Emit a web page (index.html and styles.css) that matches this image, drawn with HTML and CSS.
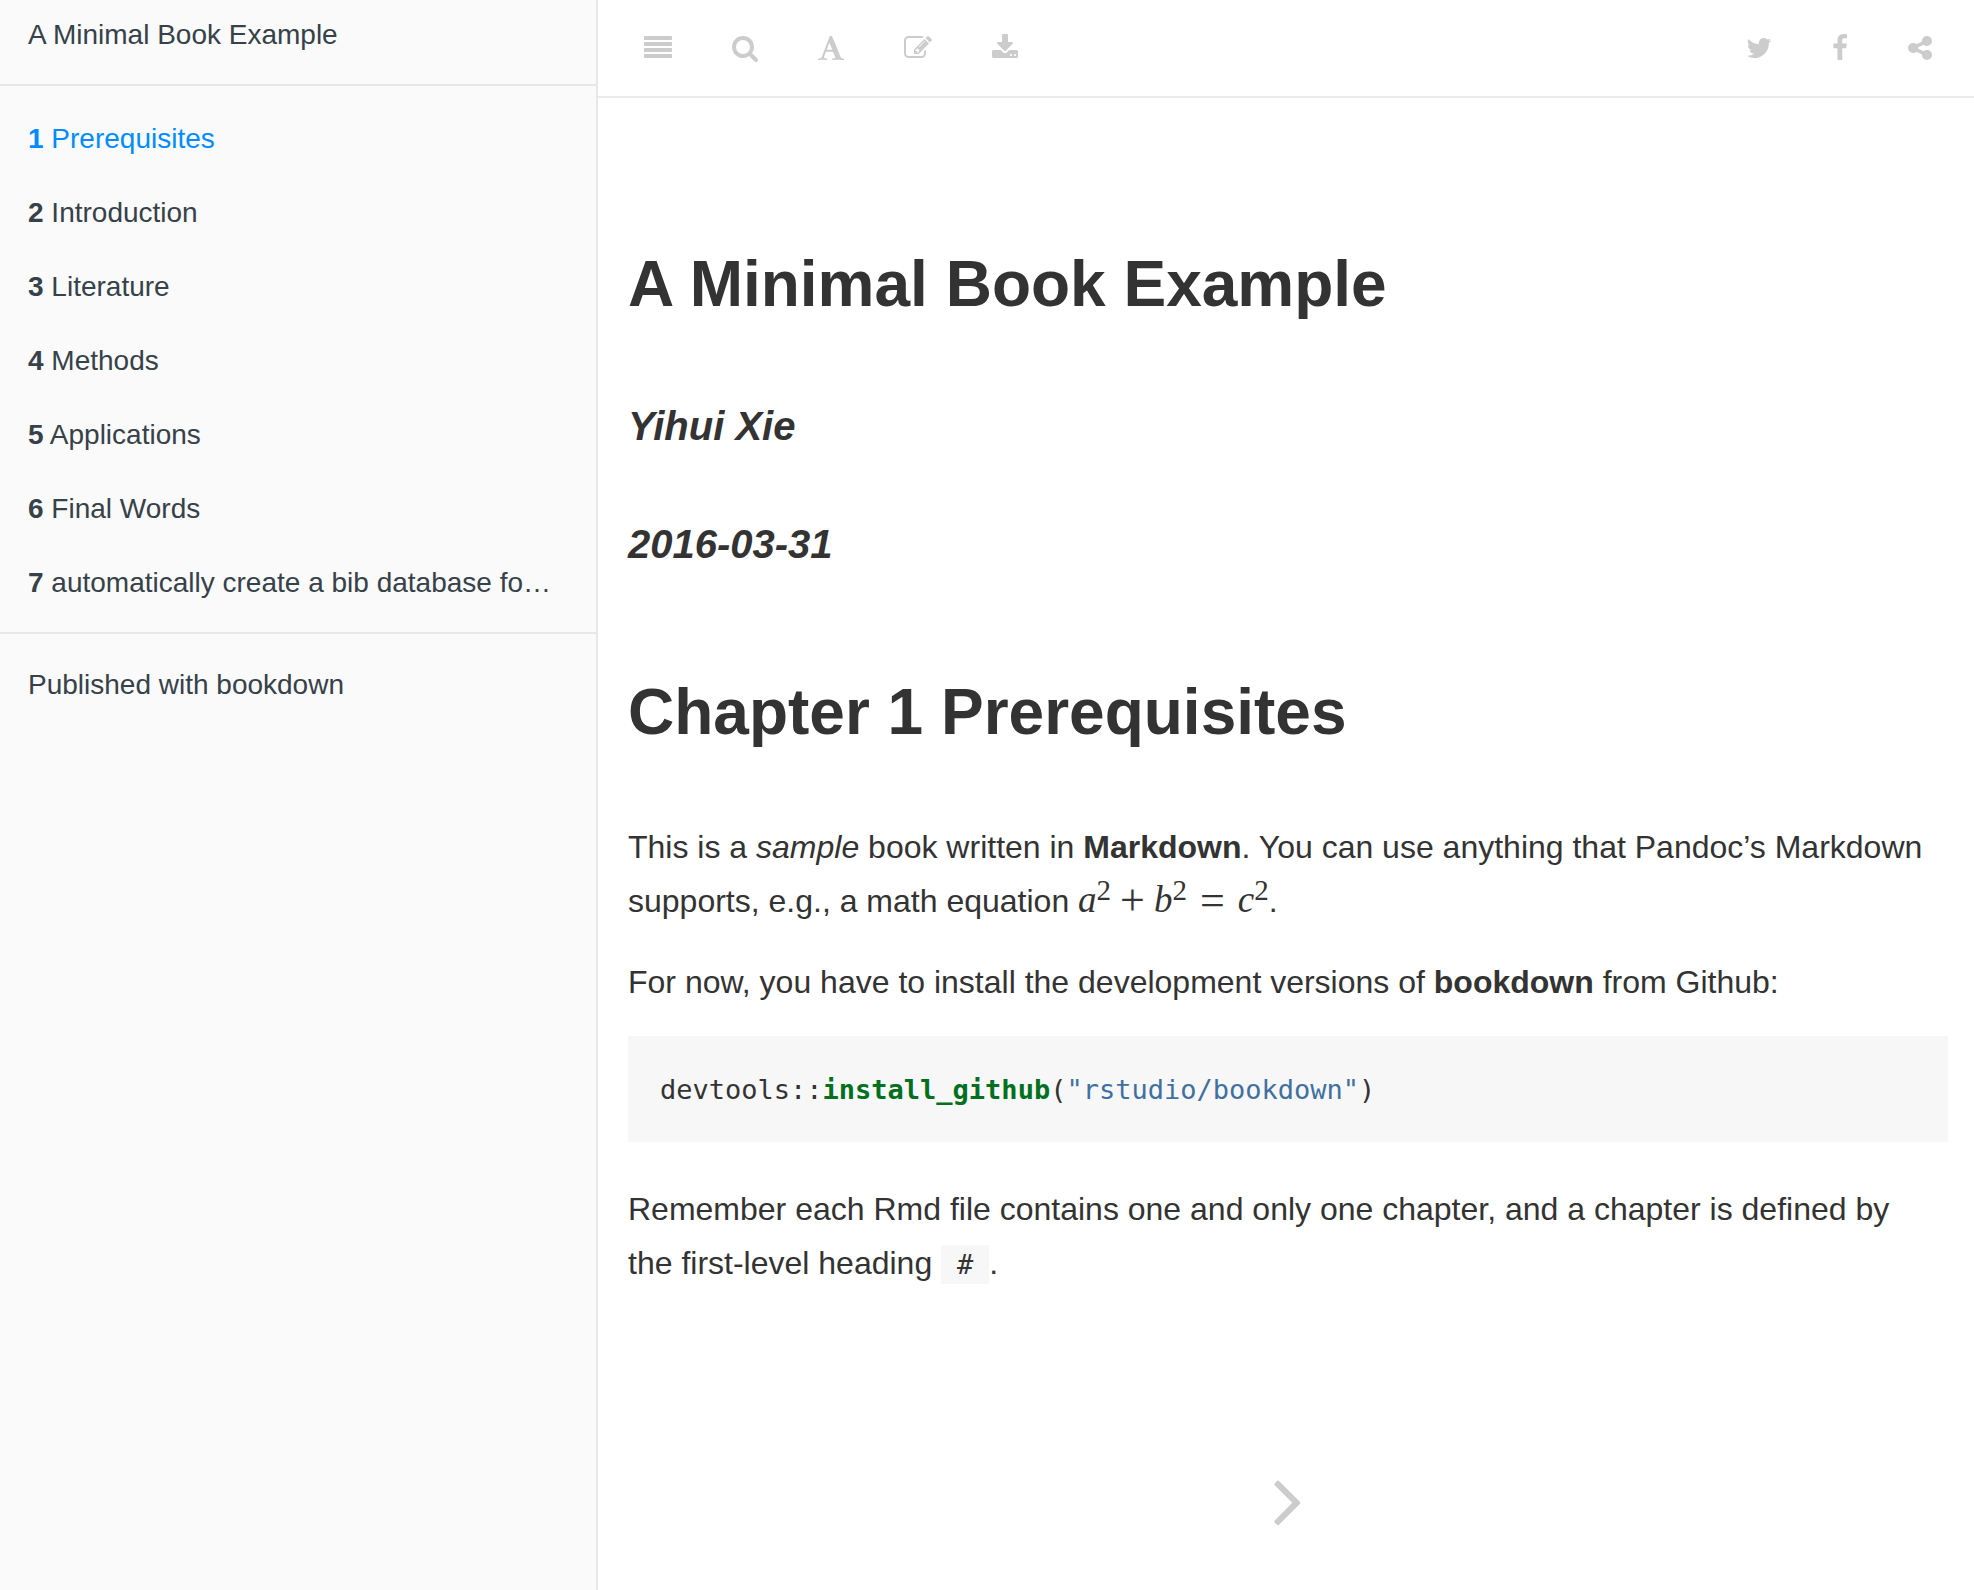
FILE: index.html
```html
<!DOCTYPE html>
<html lang="en">
<head>
<meta charset="utf-8">
<meta name="viewport" content="width=device-width, initial-scale=1">
<title>A Minimal Book Example</title>
<link rel="stylesheet" href="styles.css">
</head>
<body>
<div class="book">
  <aside class="sidebar">
    <a class="sidebar-link book-title" href="#top">A Minimal Book Example</a>
    <nav class="chapters" aria-label="Chapters">
      <a class="sidebar-link active" href="#prerequisites"><b>1</b> Prerequisites</a>
      <a class="sidebar-link" href="#introduction"><b>2</b> Introduction</a>
      <a class="sidebar-link" href="#literature"><b>3</b> Literature</a>
      <a class="sidebar-link" href="#methods"><b>4</b> Methods</a>
      <a class="sidebar-link" href="#applications"><b>5</b> Applications</a>
      <a class="sidebar-link" href="#final-words"><b>6</b> Final Words</a>
      <a class="sidebar-link" href="#bib"><b>7</b> automatically create a bib database fo…</a>
    </nav>
    <a class="sidebar-link published" href="#bookdown">Published with bookdown</a>
  </aside>
  <div class="body">
    <header class="toolbar">
      <div class="tools">
        <button class="tool" type="button" aria-label="Toggle sidebar"><svg width="28" height="28" viewBox="0 0 1792 1792"><path d="M1792 1344v128q0 26-19 45t-45 19h-1664q-26 0-45-19t-19-45v-128q0-26 19-45t45-19h1664q26 0 45 19t19 45zm0-384v128q0 26-19 45t-45 19h-1664q-26 0-45-19t-19-45v-128q0-26 19-45t45-19h1664q26 0 45 19t19 45zm0-384v128q0 26-19 45t-45 19h-1664q-26 0-45-19t-19-45v-128q0-26 19-45t45-19h1664q26 0 45 19t19 45zm0-384v128q0 26-19 45t-45 19h-1664q-26 0-45-19t-19-45v-128q0-26 19-45t45-19h1664q26 0 45 19t19 45z"/></svg></button>
        <button class="tool" type="button" aria-label="Search"><svg width="26" height="28" viewBox="64 0 1664 1792"><path d="M1216 832q0-185-131.500-316.500t-316.500-131.500-316.500 131.500-131.500 316.500 131.500 316.500 316.500 131.500 316.500-131.500 131.500-316.500zm512 832q0 52-38 90t-90 38q-54 0-90-38l-343-342q-179 124-399 124-143 0-273.500-55.500t-225-150-150-225-55.500-273.500 55.500-273.500 150-225 225-150 273.500-55.500 273.500 55.500 225 150 150 225 55.500 273.500q0 220-124 399l343 343q37 37 37 90z"/></svg></button>
        <button class="tool" type="button" aria-label="Font settings"><svg width="26" height="28" viewBox="64 0 1664 1792"><path d="M789 559l-170 450q33 0 136.500 2t160.500 2q19 0 57-2-87-253-184-452zm-725 1105l2-79q23-7 56-12.500t57-10.500 49.500-14.500 44.500-29 31-50.500l237-616 280-724h128q8 14 11 21l205 480q33 78 106 257.500t114 274.500q15 34 58 144.500t72 168.500q20 45 35 57 19 15 88 29.500t84 20.500q6 38 6 57 0 5-.5 13.500t-.5 12.500q-63 0-190-8t-191-8q-76 0-215 7t-178 8q0-43 4-78l131-28q1 0 12.500-2.500t15.500-3.500 14.500-4.500 15-6.500 11-8 9-11 2.500-14q0-16-31-96.500t-72-177.500-42-100l-450-2q-26 58-76.500 195.500t-50.500 162.500q0 22 14 37.500t43.500 24.500 48.500 13.500 57 8.500 41 4q1 19 1 58 0 9-2 27-58 0-174.500-10t-174.500-10q-8 0-26.500 4t-21.500 4q-80 14-188 14z"/></svg></button>
        <button class="tool" type="button" aria-label="Edit"><svg width="28" height="28" viewBox="0 0 1792 1792"><path d="M888 1184l116-116-152-152-116 116v56h96v96h56zm440-720q-16-16-33 1l-350 350q-17 17-1 33t33-1l350-350q17-17 1-33zm80 594v190q0 119-84.500 203.500t-203.500 84.500h-832q-119 0-203.500-84.500t-84.500-203.500v-832q0-119 84.500-203.500t203.500-84.500h832q63 0 117 25 15 7 18 23 3 17-9 29l-49 49q-14 14-32 8-23-6-45-6h-832q-66 0-113 47t-47 113v832q0 66 47 113t113 47h832q66 0 113-47t47-113v-126q0-13 9-22l64-64q15-15 35-7t20 29zm-96-738l288 288-672 672h-288v-288zm444 132l-92 92-288-288 92-92q28-28 68-28t68 28l152 152q28 28 28 68t-28 68z"/></svg></button>
        <button class="tool" type="button" aria-label="Download"><svg width="26" height="28" viewBox="64 0 1664 1792"><path d="M1344 1344q0-26-19-45t-45-19-45 19-19 45 19 45 45 19 45-19 19-45zm256 0q0-26-19-45t-45-19-45 19-19 45 19 45 45 19 45-19 19-45zm128-224v320q0 40-28 68t-68 28h-1472q-40 0-68-28t-28-68v-320q0-40 28-68t68-28h465l135 136q58 56 136 56t136-56l136-136h464q40 0 68 28t28 68zm-325-569q17 41-14 70l-448 448q-18 19-45 19t-45-19l-448-448q-31-29-14-70 17-39 59-39h256v-448q0-26 19-45t45-19h256q26 0 45 19t19 45v448h256q42 0 59 39z"/></svg></button>
      </div>
      <div class="tools">
        <button class="tool" type="button" aria-label="Twitter"><svg width="26" height="28" viewBox="64 0 1664 1792"><path d="M1684 408q-67 98-162 167 1 14 1 42 0 130-38 259.500t-115.500 248.500-184.500 210.500-258 146-323 54.500q-271 0-496-145 35 4 78 4 225 0 401-138-105-2-188-64.500t-114-159.500q33 5 61 5 43 0 85-11-112-23-185.500-111.500t-73.500-205.500v-4q68 38 146 41-66-44-105-115t-39-154q0-88 44-163 121 149 294.500 238.500t371.500 99.500q-8-38-8-74 0-134 94.500-228.500t228.500-94.500q140 0 236 102 109-21 205-78-37 115-142 178 93-10 186-50z"/></svg></button>
        <button class="tool" type="button" aria-label="Facebook"><svg width="16" height="28" viewBox="384 0 1024 1792"><path d="M1343 12v264h-157q-86 0-116 36t-30 108v189h293l-39 296h-254v759h-306v-759h-255v-296h255v-218q0-186 104-288.500t277-102.500q147 0 228 12z"/></svg></button>
        <button class="tool" type="button" aria-label="Share"><svg width="24" height="28" viewBox="128 0 1536 1792"><path d="M1344 1024q133 0 226.500 93.500t93.500 226.500-93.500 226.500-226.500 93.500-226.500-93.500-93.500-226.500q0-12 2-34l-360-180q-92 86-218 86-133 0-226.500-93.500t-93.500-226.500 93.500-226.500 226.500-93.500q126 0 218 86l360-180q-2-22-2-34 0-133 93.500-226.500t226.500-93.500 226.500 93.500 93.500 226.500-93.500 226.500-226.500 93.500q-126 0-218-86l-360 180q2 22 2 34t-2 34l360 180q92-86 218-86z"/></svg></button>
      </div>
    </header>
    <main class="page">
      <h1 class="heading" id="top">A Minimal Book Example</h1>
      <p class="byline author">Yihui Xie</p>
      <p class="byline date">2016-03-31</p>
      <h1 class="heading chapter" id="prerequisites">Chapter 1 Prerequisites</h1>
      <p class="text">This is a <em>sample</em> book written in <strong>Markdown</strong>. You can use anything that Pandoc’s Markdown supports, e.g., a math equation <span class="math"><i>a</i><sup>2</sup><span class="op">+</span><i>b</i><sup>2</sup><span class="op rel">=</span><i>c</i><sup>2</sup></span>.</p>
      <p class="text">For now, you have to install the development versions of <strong>bookdown</strong> from Github:</p>
      <pre class="code-block"><code>devtools::<span class="fn">install_github</span>(<span class="str">"rstudio/bookdown"</span>)</code></pre>
      <p class="text">Remember each Rmd file contains one and only one chapter, and a chapter is defined by the first-level heading <code class="inline-code">#</code>.</p>
      <a class="next" href="#introduction" aria-label="Next chapter"><svg width="80" height="80" viewBox="0 0 1792 1792"><path d="M1171 960q0 13-10 23l-466 466q-10 10-23 10t-23-10l-50-50q-10-10-10-23t10-23l393-393-393-393q-10-10-10-23t10-23l50-50q10-10 23-10t23 10l466 466q10 10 10 23z"/></svg></a>
    </main>
  </div>
</div>
</body>
</html>
```
FILE: styles.css
```css
* {
  box-sizing: border-box;
}

body {
  margin: 0;
  background: #fff;
  color: #333;
  font-family: "Helvetica Neue", "Liberation Sans", Arial, sans-serif;
  font-size: 32px;
  line-height: 54px;
}

svg {
  display: block;
  fill: currentColor;
}

.book {
  display: flex;
  min-height: 100vh;
}

/* Sidebar */

.sidebar {
  flex: 0 0 598px;
  min-width: 0;
  background: #fafafa;
  border-right: 2px solid #e8e8e8;
}

.sidebar-link {
  display: block;
  padding: 20px 28px;
  overflow: hidden;
  color: #364149;
  font-size: 28px;
  line-height: 34px;
  text-decoration: none;
  text-overflow: ellipsis;
  white-space: nowrap;
}

.sidebar-link.active {
  color: #008cff;
}

.book-title {
  padding: 18px 28px 32px;
}

.chapters {
  padding: 16px 0 12px;
  border-top: 2px solid #e8e8e8;
  border-bottom: 2px solid #e8e8e8;
}

.published {
  padding-top: 34px;
}

/* Toolbar */

.body {
  flex: 1;
  min-width: 0;
}

.toolbar {
  display: flex;
  justify-content: space-between;
  padding: 34px 12px 34px 16px;
  border-bottom: 2px solid #ebebeb;
}

.tools {
  display: flex;
}

.tool {
  padding: 0 30px;
  border: 0;
  background: none;
  color: #ccc;
  cursor: pointer;
}

/* Page */

.page {
  padding: 148px 26px 50px 30px;
}

.heading {
  margin: 0;
  font-size: 64px;
  line-height: 76px;
}

.byline {
  margin: 0;
  font-size: 40px;
  font-style: italic;
  font-weight: bold;
  line-height: 48px;
}

.author {
  margin-top: 80px;
}

.date {
  margin-top: 70px;
}

.chapter {
  margin: 106px 0 70px;
}

.text {
  margin: 0 0 27px;
  padding-right: 16px;
}

.math {
  font-family: "Liberation Serif", serif;
  font-size: 37px;
  line-height: 1;
}

.math sup {
  position: relative;
  bottom: 12px;
  font-size: 29px;
  line-height: 1;
  vertical-align: baseline;
}

.op {
  margin: 0 9px;
  font-size: 44px;
  line-height: 1;
  vertical-align: -3px;
}

.rel {
  margin: 0 13px;
}

.code-block,
.inline-code {
  background: #f7f7f7;
  font-family: "DejaVu Sans Mono", monospace;
  font-size: 27px;
}

.code-block {
  margin: 0 0 40px;
  padding: 28px 32px 26px;
  line-height: 52px;
  overflow: auto;
}

.code-block code {
  font: inherit;
}

.fn {
  color: #007020;
  font-weight: bold;
}

.str {
  color: #4070a0;
}

.inline-code {
  padding: 4px 16px;
}

.next {
  display: block;
  width: 80px;
  margin: 168px auto 0;
  color: #ccc;
}
```
